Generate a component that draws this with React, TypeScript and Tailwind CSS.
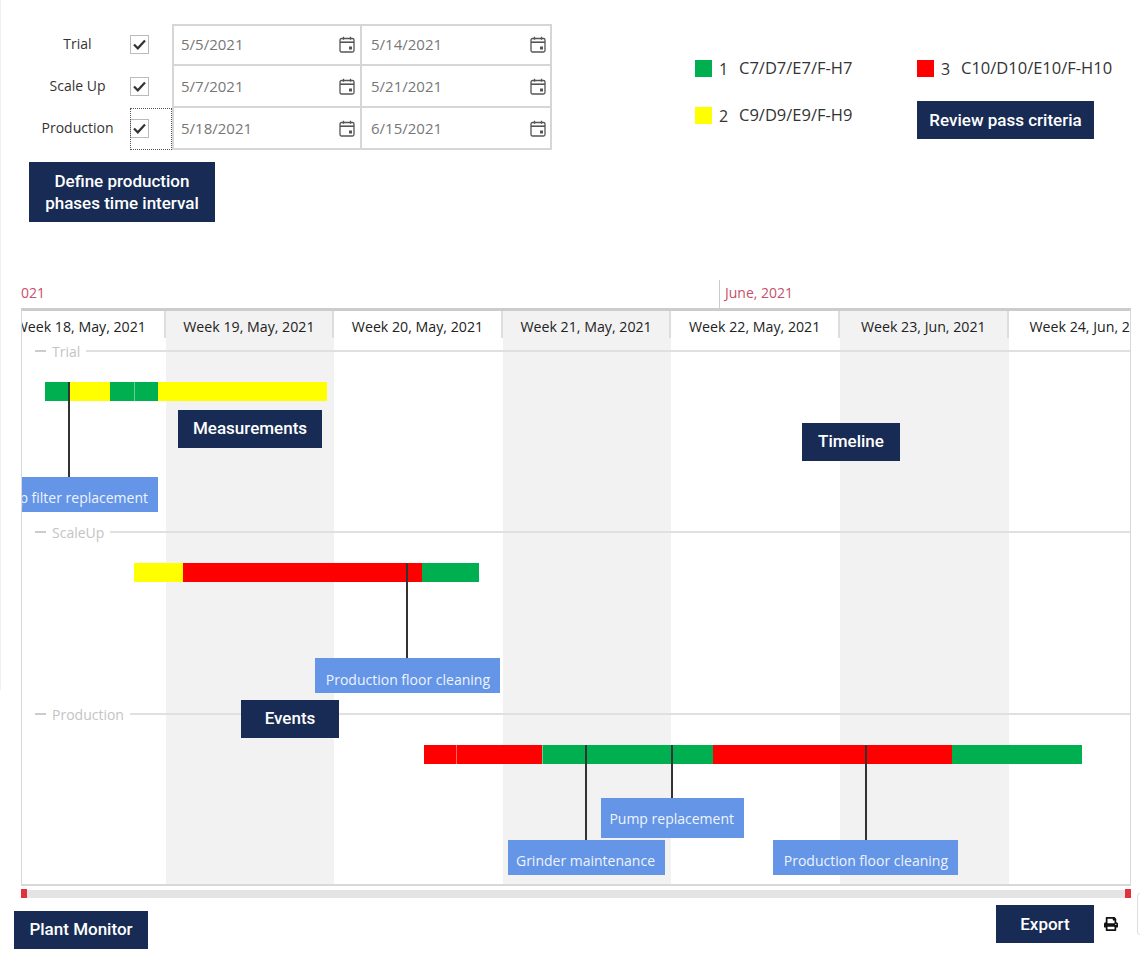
import { FaPrint } from "react-icons/fa";

const phases = [
  { name: "Trial", from: "5/5/2021", to: "5/14/2021" },
  { name: "Scale Up", from: "5/7/2021", to: "5/21/2021" },
  { name: "Production", from: "5/18/2021", to: "6/15/2021" },
];

const weeks = [
  "Week 18, May, 2021",
  "Week 19, May, 2021",
  "Week 20, May, 2021",
  "Week 21, May, 2021",
  "Week 22, May, 2021",
  "Week 23, Jun, 2021",
  "Week 24, Jun, 2021",
];

const GREEN = "#00b050";
const YELLOW = "#ffff00";
const RED = "#ff0000";

// bar and event positions are in timeline pixels, x measured from the box's inner left edge
const lanes = [
  {
    name: "Trial",
    height: 181,
    segments: [
      { x: 23, w: 25, color: GREEN },
      { x: 48, w: 40, color: YELLOW },
      { x: 88, w: 24, color: GREEN },
      { x: 112, w: 24, color: GREEN, divider: true },
      { x: 136, w: 169, color: YELLOW },
    ],
    events: [{ label: "Pump filter replacement", line: 46, x: -40, w: 176, top: 136, h: 35, pad: 6 }],
  },
  {
    name: "ScaleUp",
    height: 182,
    segments: [
      { x: 112, w: 49, color: YELLOW },
      { x: 161, w: 239, color: RED },
      { x: 400, w: 57, color: GREEN },
    ],
    events: [{ label: "Production floor cleaning", line: 384, x: 293, w: 185, top: 136, h: 35, pad: 7 }],
  },
  {
    name: "Production",
    height: 170,
    segments: [
      { x: 402, w: 32, color: RED },
      { x: 434, w: 86, color: RED, divider: true },
      { x: 520, w: 171, color: GREEN, divider: true },
      { x: 691, w: 239, color: RED },
      { x: 930, w: 130, color: GREEN },
    ],
    events: [
      { label: "Grinder maintenance", line: 563, x: 486, w: 157, top: 136, h: 35, pad: 6 },
      { label: "Pump replacement", line: 649, x: 579, w: 143, top: 94, h: 40, pad: 0 },
      { label: "Production floor cleaning", line: 843, x: 751, w: 185, top: 136, h: 35, pad: 6 },
    ],
  },
];

function CalendarIcon() {
  return (
    <svg width="16" height="17" viewBox="0 0 16 17" fill="none" stroke="#555" strokeWidth="1.3">
      <rect x="1" y="2.5" width="14" height="13.5" rx="1.5" />
      <path d="M1 6.2h14" strokeWidth="1.6" />
      <path d="M4.5 0.8v3M11.5 0.8v3" />
      <rect x="10" y="10.5" width="3" height="3" fill="#555" stroke="none" />
    </svg>
  );
}

function Callout({ className, children }: { className: string; children: React.ReactNode }) {
  return (
    <div
      className={`absolute z-20 flex items-center justify-center bg-[#172b54] text-center font-['Roboto',sans-serif] text-[17px] font-medium leading-[22px] text-white ${className}`}
    >
      {children}
    </div>
  );
}

function DateCell({ value, second, first }: { value: string; second?: boolean; first: boolean }) {
  return (
    <div
      className={`flex h-[42px] w-[190px] items-center justify-between border-2 border-[#d6d6d6] ${
        second ? "border-l-0 pl-[9px] pr-[4px]" : "pl-[7px] pr-[5px]"
      } ${first ? "pb-[2px]" : "border-t-0"}`}
    >
      <span className="text-[15px] text-[#777]">{value}</span>
      <CalendarIcon />
    </div>
  );
}

function PhaseForm() {
  return (
    <div className="ml-[30px] flex flex-col">
      {phases.map((p, i) => (
        <div key={p.name} className="flex items-center">
          <div className="w-[95px] pb-[3px] text-center text-[14px] text-[#333]">{p.name}</div>
          <div
            className={`ml-[5px] flex h-[42px] w-[42px] items-center pb-[1px] ${
              i === 2 ? "outline-dotted outline-1 -outline-offset-1 outline-[#555]" : ""
            }`}
          >
            <div className="flex h-[19px] w-[19px] items-center justify-center border border-[#bbb] bg-white">
              <svg width="13" height="11" viewBox="0 0 13 11" fill="none" stroke="#333" strokeWidth="2.2">
                <path d="M1 5.5l3.8 3.8L12 1.5" />
              </svg>
            </div>
          </div>
          <div className="flex">
            <DateCell value={p.from} first={i === 0} />
            <DateCell value={p.to} first={i === 0} second />
          </div>
        </div>
      ))}
    </div>
  );
}

function LegendItem({ color, n, text }: { color: string; n: number; text: string }) {
  return (
    <div className="flex h-[17px] items-center text-[16.5px] text-[#333]">
      <div className="h-[17px] w-[17px]" style={{ backgroundColor: color }} />
      <span className="ml-[7px] w-[20px] text-[16px]">{n}</span>
      <span className="whitespace-nowrap">{text}</span>
    </div>
  );
}

function Lane({ lane }: { lane: (typeof lanes)[number] }) {
  return (
    <div className="relative" style={{ height: lane.height }}>
      <div className="flex h-[20px] items-center pl-[13px] text-[14px] text-[#c4c4c4]">
        <div className="h-[2px] w-[11px] bg-[#ccc]" />
        <span className="ml-[6px] mr-[6px]">{lane.name}</span>
        <div className="h-[2px] flex-1 bg-[#e0e0e0]" />
      </div>
      {lane.events.map((e) => (
        <div
          key={e.label + e.line}
          className="absolute top-[41px] z-10 w-[2px] bg-[#333]"
          style={{ left: e.line, height: e.top - 41 }}
        />
      ))}
      {lane.segments.map((s) => (
        <div
          key={s.x}
          className={`absolute top-[41px] h-[19px] ${s.divider ? "border-l border-white/40" : ""}`}
          style={{ left: s.x, width: s.w, backgroundColor: s.color }}
        />
      ))}
      {lane.events.map((e) => (
        <div
          key={e.label + e.x}
          className="absolute z-10 flex items-center justify-end whitespace-nowrap bg-[#6495e6] pr-[10px] text-[14px] text-[#eef4ff]"
          style={{ left: e.x, top: e.top, width: e.w, height: e.h, paddingTop: e.pad }}
        >
          {e.label}
        </div>
      ))}
    </div>
  );
}

function Timeline() {
  return (
    <div className="ml-[21px] w-[1110px]">
      <div className="relative h-[28px] text-[14px] text-[#c8506a]">
        <span className="absolute left-0 top-[2px]">021</span>
        <div className="absolute left-[698px] top-0 h-[28px] w-px bg-[#ccc]" />
        <span className="absolute left-[704px] top-[2px]">June, 2021</span>
      </div>
      <div className="relative h-[578px] overflow-hidden border-x border-b-2 border-t-[3px] border-x-[#d8d8d8] border-b-[#d8d8d8] border-t-[#ccc]">
        <div className="absolute inset-0 ml-[-25px] flex">
          {weeks.map((w, i) => (
            <div key={w} className={`w-[168.6px] shrink-0 ${i % 2 === 1 ? "bg-[#f2f2f2]" : "bg-white"}`} />
          ))}
        </div>
        <div className="relative ml-[-25px] flex h-[30px]">
          {weeks.map((w) => (
            <div
              key={w}
              className="flex h-[27px] w-[168.6px] shrink-0 items-center justify-center whitespace-nowrap border-r-2 border-[#ddd] pt-[4px] text-[14.2px] text-[#222]"
            >
              {w}
            </div>
          ))}
        </div>
        <div className="relative">
          {lanes.map((l) => (
            <Lane key={l.name} lane={l} />
          ))}
        </div>
      </div>
      <div className="mt-[4px] flex h-[8px] justify-between bg-[#e4e4e4]">
        <div className="-mt-px h-[9px] w-[6px] bg-[#e2303c]" />
        <div className="-mt-px h-[9px] w-[6px] bg-[#e2303c]" />
      </div>
    </div>
  );
}

export default function App() {
  return (
    <div className="relative h-[953px] w-[1140px] overflow-hidden bg-white font-['Open_Sans',sans-serif]">
      <div className="absolute left-0 top-0 h-[690px] w-px bg-[#f0f0f0]" />
      <div className="flex h-[280px] pt-[24px]">
        <PhaseForm />
        <div className="ml-[143px] mt-[36px] grid h-[64px] grid-cols-[222px_auto] gap-y-[30px]">
          <LegendItem color={GREEN} n={1} text="C7/D7/E7/F-H7" />
          <LegendItem color={RED} n={3} text="C10/D10/E10/F-H10" />
          <LegendItem color={YELLOW} n={2} text="C9/D9/E9/F-H9" />
        </div>
      </div>
      <Timeline />

      <Callout className="left-[29px] top-[162px] h-[60px] w-[186px]">
        Define production
        <br />
        phases time interval
      </Callout>
      <Callout className="left-[917px] top-[101px] h-[38px] w-[177px]">Review pass criteria</Callout>
      <Callout className="left-[178px] top-[410px] h-[38px] w-[144px] pb-[2px]">Measurements</Callout>
      <Callout className="left-[802px] top-[423px] h-[38px] w-[98px] pb-[2px]">Timeline</Callout>
      <Callout className="left-[241px] top-[700px] h-[38px] w-[98px] pb-[2px]">Events</Callout>
      <Callout className="left-[14px] top-[911px] h-[38px] w-[134px] pb-[2px]">Plant Monitor</Callout>
      <Callout className="left-[996px] top-[905px] h-[38px] w-[98px]">Export</Callout>
      <FaPrint className="absolute left-[1104px] top-[917px] text-[14px] text-[#111]" />
      <div className="absolute left-[1137px] top-[893px] h-[42px] w-[8px] rounded-l-[3px] border border-[#ddd]" />
    </div>
  );
}
